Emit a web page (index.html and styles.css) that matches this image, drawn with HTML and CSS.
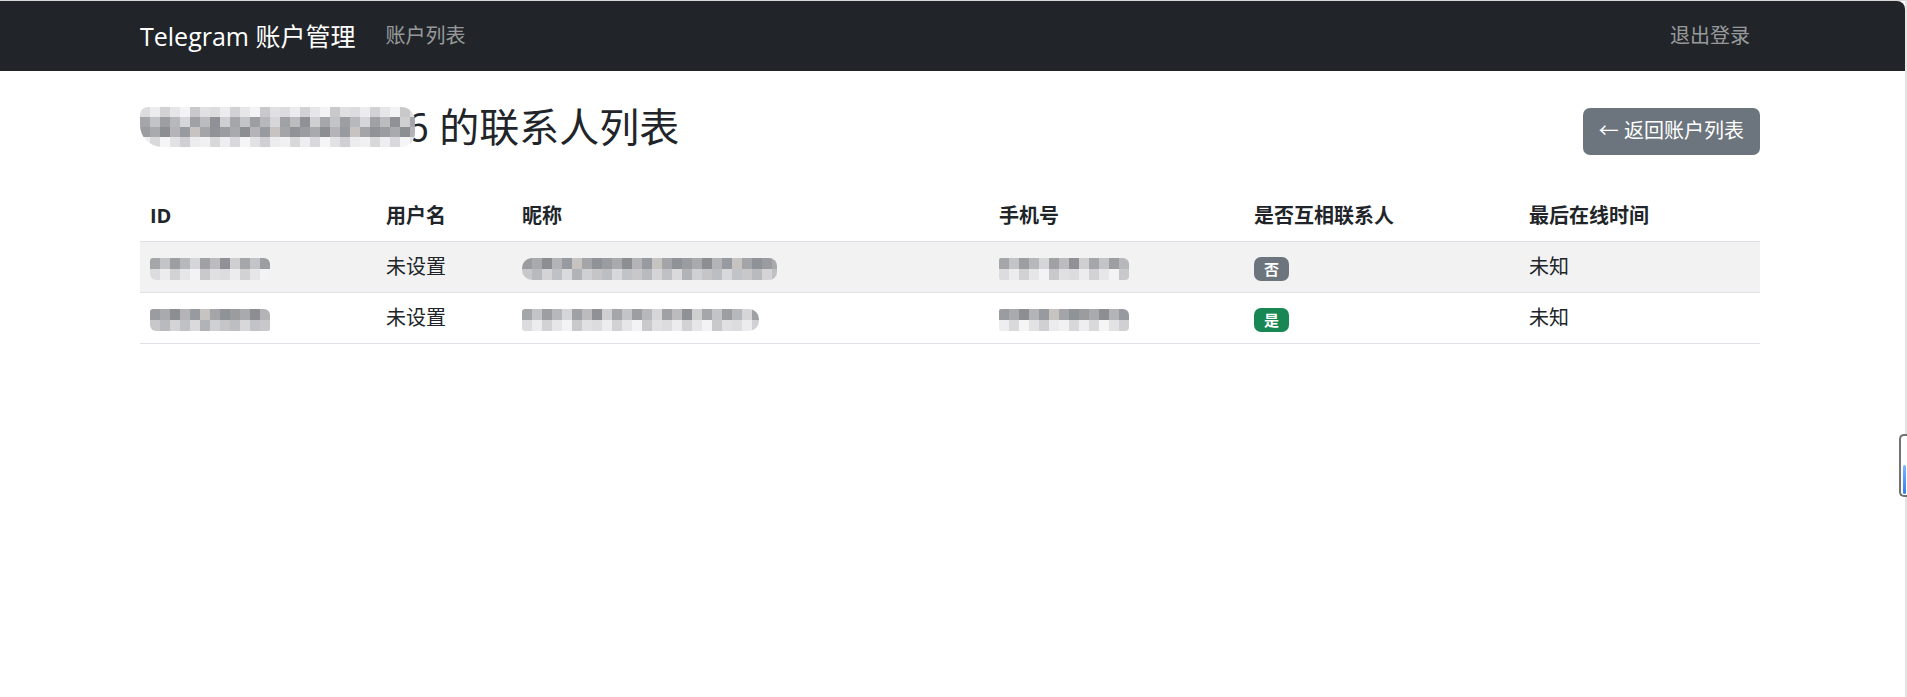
FILE: index.html
```html
<!DOCTYPE html>
<html lang="zh-CN">
<head>
<meta charset="utf-8">
<title>联系人列表</title>
<link rel="stylesheet" href="styles.css">
</head>
<body>
<nav class="navbar">
  <div class="container nav-inner">
    <a class="brand" href="#">Telegram 账户管理</a>
    <a class="nav-link" href="#">账户列表</a>
    <a class="nav-link nav-right" href="#">退出登录</a>
  </div>
</nav>

<main class="container page">
  <div class="page-head">
    <h2 class="title">
      <span class="mosaic mosaic-title">
        <span class="row pB"></span>
        <span class="row pA"></span>
        <span class="row pC"></span>
        <span class="row pB2"></span>
      </span>
      <span class="title-text">6 的联系人列表</span>
    </h2>
    <a class="btn" href="#">← 返回账户列表</a>
  </div>

  <table class="table">
    <thead>
      <tr>
        <th class="c-id">ID</th>
        <th class="c-user">用户名</th>
        <th class="c-nick">昵称</th>
        <th class="c-phone">手机号</th>
        <th class="c-mutual">是否互相联系人</th>
        <th class="c-seen">最后在线时间</th>
      </tr>
    </thead>
    <tbody>
      <tr class="striped">
        <td><span class="mosaic m-id"><span class="row pA"></span><span class="row pB"></span></span></td>
        <td>未设置</td>
        <td><span class="mosaic m-nick1"><span class="row pC"></span><span class="row pD"></span></span></td>
        <td><span class="mosaic m-phone"><span class="row pA"></span><span class="row pB"></span></span></td>
        <td><span class="badge badge-no">否</span></td>
        <td>未知</td>
      </tr>
      <tr>
        <td><span class="mosaic m-id"><span class="row pC"></span><span class="row pD"></span></span></td>
        <td>未设置</td>
        <td><span class="mosaic m-nick2"><span class="row pA"></span><span class="row pB"></span></span></td>
        <td><span class="mosaic m-phone"><span class="row pC"></span><span class="row pB2"></span></span></td>
        <td><span class="badge badge-yes">是</span></td>
        <td>未知</td>
      </tr>
    </tbody>
  </table>
</main>

<div class="edge-handle"><span class="edge-thumb"></span></div>
</body>
</html>
```

FILE: styles.css
```css
* { box-sizing: border-box; }

html { background: #ffffff; }

body {
  margin: 0;
  min-height: 697px;
  padding-right: 5px;
  border-top: 1px solid #d9d9d9;
  border-right: 2px solid #e4e4e4;
  font-family: "Segoe UI", "Open Sans", "Noto Sans CJK SC", sans-serif;
  font-size: 20px;
  line-height: 30px;
  color: #212529;
  background: #ffffff;
}

a { text-decoration: none; }

.container {
  width: 1620px;
  margin: 0 auto;
}

/* navbar */
.navbar {
  background: #212529;
  height: 70px;
  margin-right: -5px;
  padding-right: 5px;
  border-top-right-radius: 8px;
}

.nav-inner {
  height: 70px;
  display: flex;
  align-items: center;
}

.brand {
  color: #ffffff;
  font-size: 25px;
  line-height: 37px;
  margin-right: 20px;
}

.nav-link {
  color: rgba(255, 255, 255, 0.55);
  font-size: 20px;
  padding: 0 10px;
}

.nav-right { margin-left: auto; }

/* page header */
.page { padding-top: 30px; }

.page-head {
  display: flex;
  justify-content: space-between;
  align-items: center;
  margin-bottom: 30px;
}

.title {
  margin: 0 0 8px;
  display: flex;
  align-items: center;
  font-size: 40px;
  line-height: 52px;
  font-weight: 400;
  color: #212529;
}

.title-text { margin-left: -9px; }

.btn {
  display: inline-block;
  background: #6c757d;
  color: #ffffff;
  font-size: 20px;
  line-height: 30px;
  padding: 8px 16px 9px;
  border-radius: 7px;
}

/* mosaic (pixelated blur) */
.mosaic {
  display: inline-flex;
  flex-direction: column;
  vertical-align: middle;
  overflow: hidden;
  filter: blur(0.5px);
}

.mosaic .row { display: block; height: 11px; }

.mosaic-title {
  position: relative;
  z-index: 1;
  width: 275px;
  height: 40px;
  border-radius: 8px 14px 14px 22px;
}

.mosaic-title .row { height: 10px; }

.m-id { width: 120px; height: 22px; border-radius: 3px 6px 2px 6px; }
.m-nick1 { width: 255px; height: 22px; border-radius: 10px 8px 8px 10px; }
.m-nick2 { width: 237px; height: 22px; border-radius: 3px 10px 10px 3px; }
.m-phone { width: 130px; height: 22px; border-radius: 2px 6px 4px 2px; }

.pA {
  background: repeating-linear-gradient(90deg,
    #a5a6aa 0 10px, #c3c4c8 10px 20px, #9d9ea2 20px 30px,
    #b7b8bc 30px 40px, #d6d6d8 40px 50px, #a0a1a5 50px 60px,
    #bcbcbf 60px 70px, #8f9196 70px 80px, #cfcfd2 80px 90px);
}

.pB {
  background: repeating-linear-gradient(90deg,
    #dcdcde 0 10px, #ececee 10px 20px, #d2d2d5 20px 30px,
    #e6e6e8 30px 40px, #f3f3f5 40px 50px, #c9c9cc 50px 60px,
    #e0e0e2 60px 70px);
}

.pB2 {
  background: repeating-linear-gradient(90deg,
    #eeeef0 0 10px, #d9d9dc 10px 20px, #f5f5f6 20px 30px,
    #e2e2e4 30px 40px, #d0d0d3 40px 50px, #ececee 50px 60px,
    #f1f1f2 60px 70px, #d8d8da 70px 80px);
}

.pC {
  background: repeating-linear-gradient(90deg,
    #9b9ca0 0 10px, #a9aaae 10px 20px, #8c8e92 20px 30px,
    #b4b4b8 30px 40px, #979a9e 40px 50px, #c6c3c0 50px 60px,
    #a3a5a9 60px 70px, #8f9297 70px 80px);
}

.pD {
  background: repeating-linear-gradient(90deg,
    #c8c8cb 0 10px, #b9babd 10px 20px, #d4d4d7 20px 30px,
    #c0c1c4 30px 40px, #dadadd 40px 50px, #b2b3b6 50px 60px,
    #cfd0d3 60px 70px, #c5c4c7 70px 80px, #bdbec1 80px 90px,
    #d8d8da 90px 100px, #c2c3c6 100px 110px);
}

/* table */
.table {
  width: 1620px;
  border-collapse: collapse;
  table-layout: fixed;
}

.table th,
.table td {
  padding: 10px;
  line-height: 30px;
  text-align: left;
  vertical-align: middle;
  border-bottom: 1px solid #dee2e6;
  white-space: nowrap;
}

.table th { font-weight: 700; }

.c-id { width: 236px; }
.c-user { width: 136px; }
.c-nick { width: 477px; }
.c-phone { width: 255px; }
.c-mutual { width: 275px; }
.c-seen { width: 241px; }

.striped td { background: #f2f2f2; }

.badge {
  display: inline-block;
  font-size: 15px;
  line-height: 15px;
  font-weight: 700;
  color: #ffffff;
  padding: 5px 10px 4px;
  border-radius: 7px;
  vertical-align: middle;
}

.badge-no { background: #6c757d; }
.badge-yes { background: #198754; }

/* browser edge handle overlay */
.edge-handle {
  position: absolute;
  left: 1899px;
  top: 434px;
  width: 8px;
  height: 63px;
  border: 2px solid #727272;
  border-right: none;
  border-radius: 5px 0 0 5px;
  background: #ffffff;
}

.edge-thumb {
  position: absolute;
  left: 2px;
  bottom: 1px;
  width: 3px;
  height: 29px;
  border-radius: 2px;
  background: linear-gradient(#7cb8ff, #2f80ed);
}
```
